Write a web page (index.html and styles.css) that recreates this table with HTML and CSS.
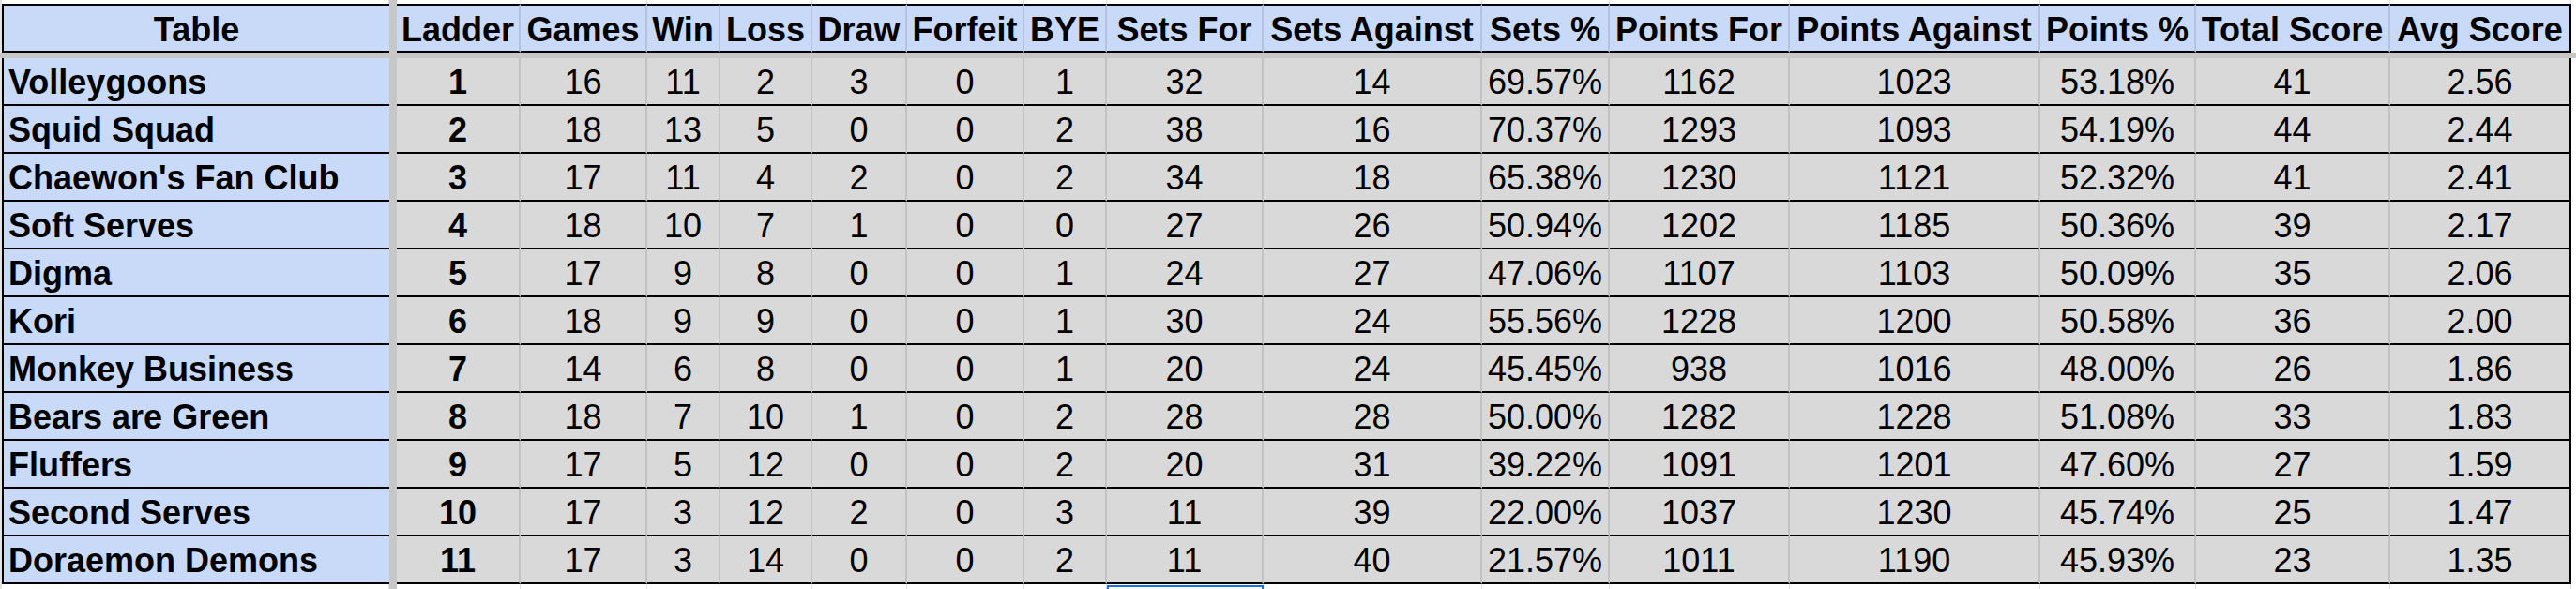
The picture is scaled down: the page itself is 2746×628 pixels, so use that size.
FILE: index.html
```html
<!DOCTYPE html>
<html>
<head>
<meta charset="utf-8">
<link rel="stylesheet" href="styles.css">
</head>
<body>
<div class="sheet">
  <div class="row strip top">
    <div class="g"></div><div class="fz"></div>
    <div class="g"></div><div class="g"></div><div class="g"></div><div class="g"></div><div class="g"></div>
    <div class="g"></div><div class="g"></div><div class="g"></div><div class="g"></div><div class="g"></div>
    <div class="g"></div><div class="g"></div><div class="g"></div><div class="g"></div><div class="g"></div>
  </div>
  <div class="row hd">
    <div class="c name">Table</div><div class="fz"></div>
    <div class="c">Ladder</div><div class="c">Games</div><div class="c">Win</div><div class="c">Loss</div><div class="c">Draw</div>
    <div class="c">Forfeit</div><div class="c">BYE</div><div class="c">Sets For</div><div class="c">Sets Against</div><div class="c">Sets %</div>
    <div class="c">Points For</div><div class="c">Points Against</div><div class="c">Points %</div><div class="c">Total Score</div><div class="c last">Avg Score</div>
  </div>
  <div class="freeze"></div>

  <div class="row rw"><div class="c name">Volleygoons</div><div class="fz"></div><div class="c rank">1</div><div class="c">16</div><div class="c">11</div><div class="c">2</div><div class="c">3</div><div class="c">0</div><div class="c">1</div><div class="c">32</div><div class="c">14</div><div class="c">69.57%</div><div class="c">1162</div><div class="c">1023</div><div class="c">53.18%</div><div class="c">41</div><div class="c last">2.56</div></div>
  <div class="row rw"><div class="c name">Squid Squad</div><div class="fz"></div><div class="c rank">2</div><div class="c">18</div><div class="c">13</div><div class="c">5</div><div class="c">0</div><div class="c">0</div><div class="c">2</div><div class="c">38</div><div class="c">16</div><div class="c">70.37%</div><div class="c">1293</div><div class="c">1093</div><div class="c">54.19%</div><div class="c">44</div><div class="c last">2.44</div></div>
  <div class="row rw"><div class="c name">Chaewon's Fan Club</div><div class="fz"></div><div class="c rank">3</div><div class="c">17</div><div class="c">11</div><div class="c">4</div><div class="c">2</div><div class="c">0</div><div class="c">2</div><div class="c">34</div><div class="c">18</div><div class="c">65.38%</div><div class="c">1230</div><div class="c">1121</div><div class="c">52.32%</div><div class="c">41</div><div class="c last">2.41</div></div>
  <div class="row rw"><div class="c name">Soft Serves</div><div class="fz"></div><div class="c rank">4</div><div class="c">18</div><div class="c">10</div><div class="c">7</div><div class="c">1</div><div class="c">0</div><div class="c">0</div><div class="c">27</div><div class="c">26</div><div class="c">50.94%</div><div class="c">1202</div><div class="c">1185</div><div class="c">50.36%</div><div class="c">39</div><div class="c last">2.17</div></div>
  <div class="row rw"><div class="c name">Digma</div><div class="fz"></div><div class="c rank">5</div><div class="c">17</div><div class="c">9</div><div class="c">8</div><div class="c">0</div><div class="c">0</div><div class="c">1</div><div class="c">24</div><div class="c">27</div><div class="c">47.06%</div><div class="c">1107</div><div class="c">1103</div><div class="c">50.09%</div><div class="c">35</div><div class="c last">2.06</div></div>
  <div class="row rw"><div class="c name">Kori</div><div class="fz"></div><div class="c rank">6</div><div class="c">18</div><div class="c">9</div><div class="c">9</div><div class="c">0</div><div class="c">0</div><div class="c">1</div><div class="c">30</div><div class="c">24</div><div class="c">55.56%</div><div class="c">1228</div><div class="c">1200</div><div class="c">50.58%</div><div class="c">36</div><div class="c last">2.00</div></div>
  <div class="row rw"><div class="c name">Monkey Business</div><div class="fz"></div><div class="c rank">7</div><div class="c">14</div><div class="c">6</div><div class="c">8</div><div class="c">0</div><div class="c">0</div><div class="c">1</div><div class="c">20</div><div class="c">24</div><div class="c">45.45%</div><div class="c">938</div><div class="c">1016</div><div class="c">48.00%</div><div class="c">26</div><div class="c last">1.86</div></div>
  <div class="row rw"><div class="c name">Bears are Green</div><div class="fz"></div><div class="c rank">8</div><div class="c">18</div><div class="c">7</div><div class="c">10</div><div class="c">1</div><div class="c">0</div><div class="c">2</div><div class="c">28</div><div class="c">28</div><div class="c">50.00%</div><div class="c">1282</div><div class="c">1228</div><div class="c">51.08%</div><div class="c">33</div><div class="c last">1.83</div></div>
  <div class="row rw"><div class="c name">Fluffers</div><div class="fz"></div><div class="c rank">9</div><div class="c">17</div><div class="c">5</div><div class="c">12</div><div class="c">0</div><div class="c">0</div><div class="c">2</div><div class="c">20</div><div class="c">31</div><div class="c">39.22%</div><div class="c">1091</div><div class="c">1201</div><div class="c">47.60%</div><div class="c">27</div><div class="c last">1.59</div></div>
  <div class="row rw"><div class="c name">Second Serves</div><div class="fz"></div><div class="c rank">10</div><div class="c">17</div><div class="c">3</div><div class="c">12</div><div class="c">2</div><div class="c">0</div><div class="c">3</div><div class="c">11</div><div class="c">39</div><div class="c">22.00%</div><div class="c">1037</div><div class="c">1230</div><div class="c">45.74%</div><div class="c">25</div><div class="c last">1.47</div></div>
  <div class="row rw"><div class="c name">Doraemon Demons</div><div class="fz"></div><div class="c rank">11</div><div class="c">17</div><div class="c">3</div><div class="c">14</div><div class="c">0</div><div class="c">0</div><div class="c">2</div><div class="c">11</div><div class="c">40</div><div class="c">21.57%</div><div class="c">1011</div><div class="c">1190</div><div class="c">45.93%</div><div class="c">23</div><div class="c last">1.35</div></div>

  <div class="row strip bottom">
    <div class="g"></div><div class="fz"></div>
    <div class="g"></div><div class="g"></div><div class="g"></div><div class="g"></div><div class="g"></div>
    <div class="g"></div><div class="g"></div><div class="g"><div class="sel"></div></div><div class="g"></div><div class="g"></div>
    <div class="g"></div><div class="g"></div><div class="g"></div><div class="g"></div><div class="g"></div>
  </div>
</div>
</body>
</html>
```

FILE: styles.css
```css
* {
  box-sizing: border-box;
  margin: 0;
  padding: 0;
}

html, body {
  background: #ffffff;
}

body {
  margin: 0;
  font-family: "Liberation Sans", Arial, sans-serif;
  font-size: 36px;
  color: #000000;
  overflow: hidden;
}

.sheet {
  width: 2746px;
  padding-left: 2px;
  background: linear-gradient(to right, #e3e3e3 0, #e3e3e3 2px, #ffffff 2px);
}

.row {
  display: grid;
  grid-template-columns: 413px 8px 132px 135px 78px 98px 101px 125px 88px 167px 233px 136px 192px 267px 166px 207px 193px;
}

.fz {
  background: #c7c7c7;
}

.c {
  display: flex;
  align-items: flex-end;
  justify-content: center;
  padding-bottom: 3px;
  line-height: 1.12;
  white-space: nowrap;
  background: #d9d9d9;
  border-right: 2px solid #c3c3c3;
}

.c.name {
  justify-content: flex-start;
  padding-left: 5px;
  background: #c9daf8;
  font-weight: bold;
  border-left: 2px solid #000000;
  border-right: 0;
}

.c.last {
  border-right: 2px solid #000000;
}

.rank {
  font-weight: bold;
}

/* header */
.hd {
  height: 52px;
}

.hd .c {
  background: #c9daf8;
  font-weight: bold;
  border-top: 2px solid #000000;
  border-bottom: 2px solid #000000;
  border-right-color: #b3c3df;
  padding-bottom: 2px;
}

.hd .c.name {
  justify-content: center;
  padding-left: 0;
}

.hd .c.last {
  border-right-color: #000000;
}

/* frozen row divider */
.freeze {
  height: 6px;
  margin-left: -2px;
  background: #c7c7c7;
}

/* data rows */
.rw {
  height: 51px;
}

.rw .c {
  border-bottom: 2px solid #000000;
}

/* empty grid strips above and below */
.strip .g {
  background: #ffffff;
  border-right: 1px solid #e1e1e1;
}

.strip.top {
  height: 4px;
}

.strip.bottom {
  height: 5px;
}

.sel {
  margin-top: 1px;
  height: 4px;
  border: 2px solid #1a73e8;
  border-bottom: 0;
  margin-right: -1px;
}
```
